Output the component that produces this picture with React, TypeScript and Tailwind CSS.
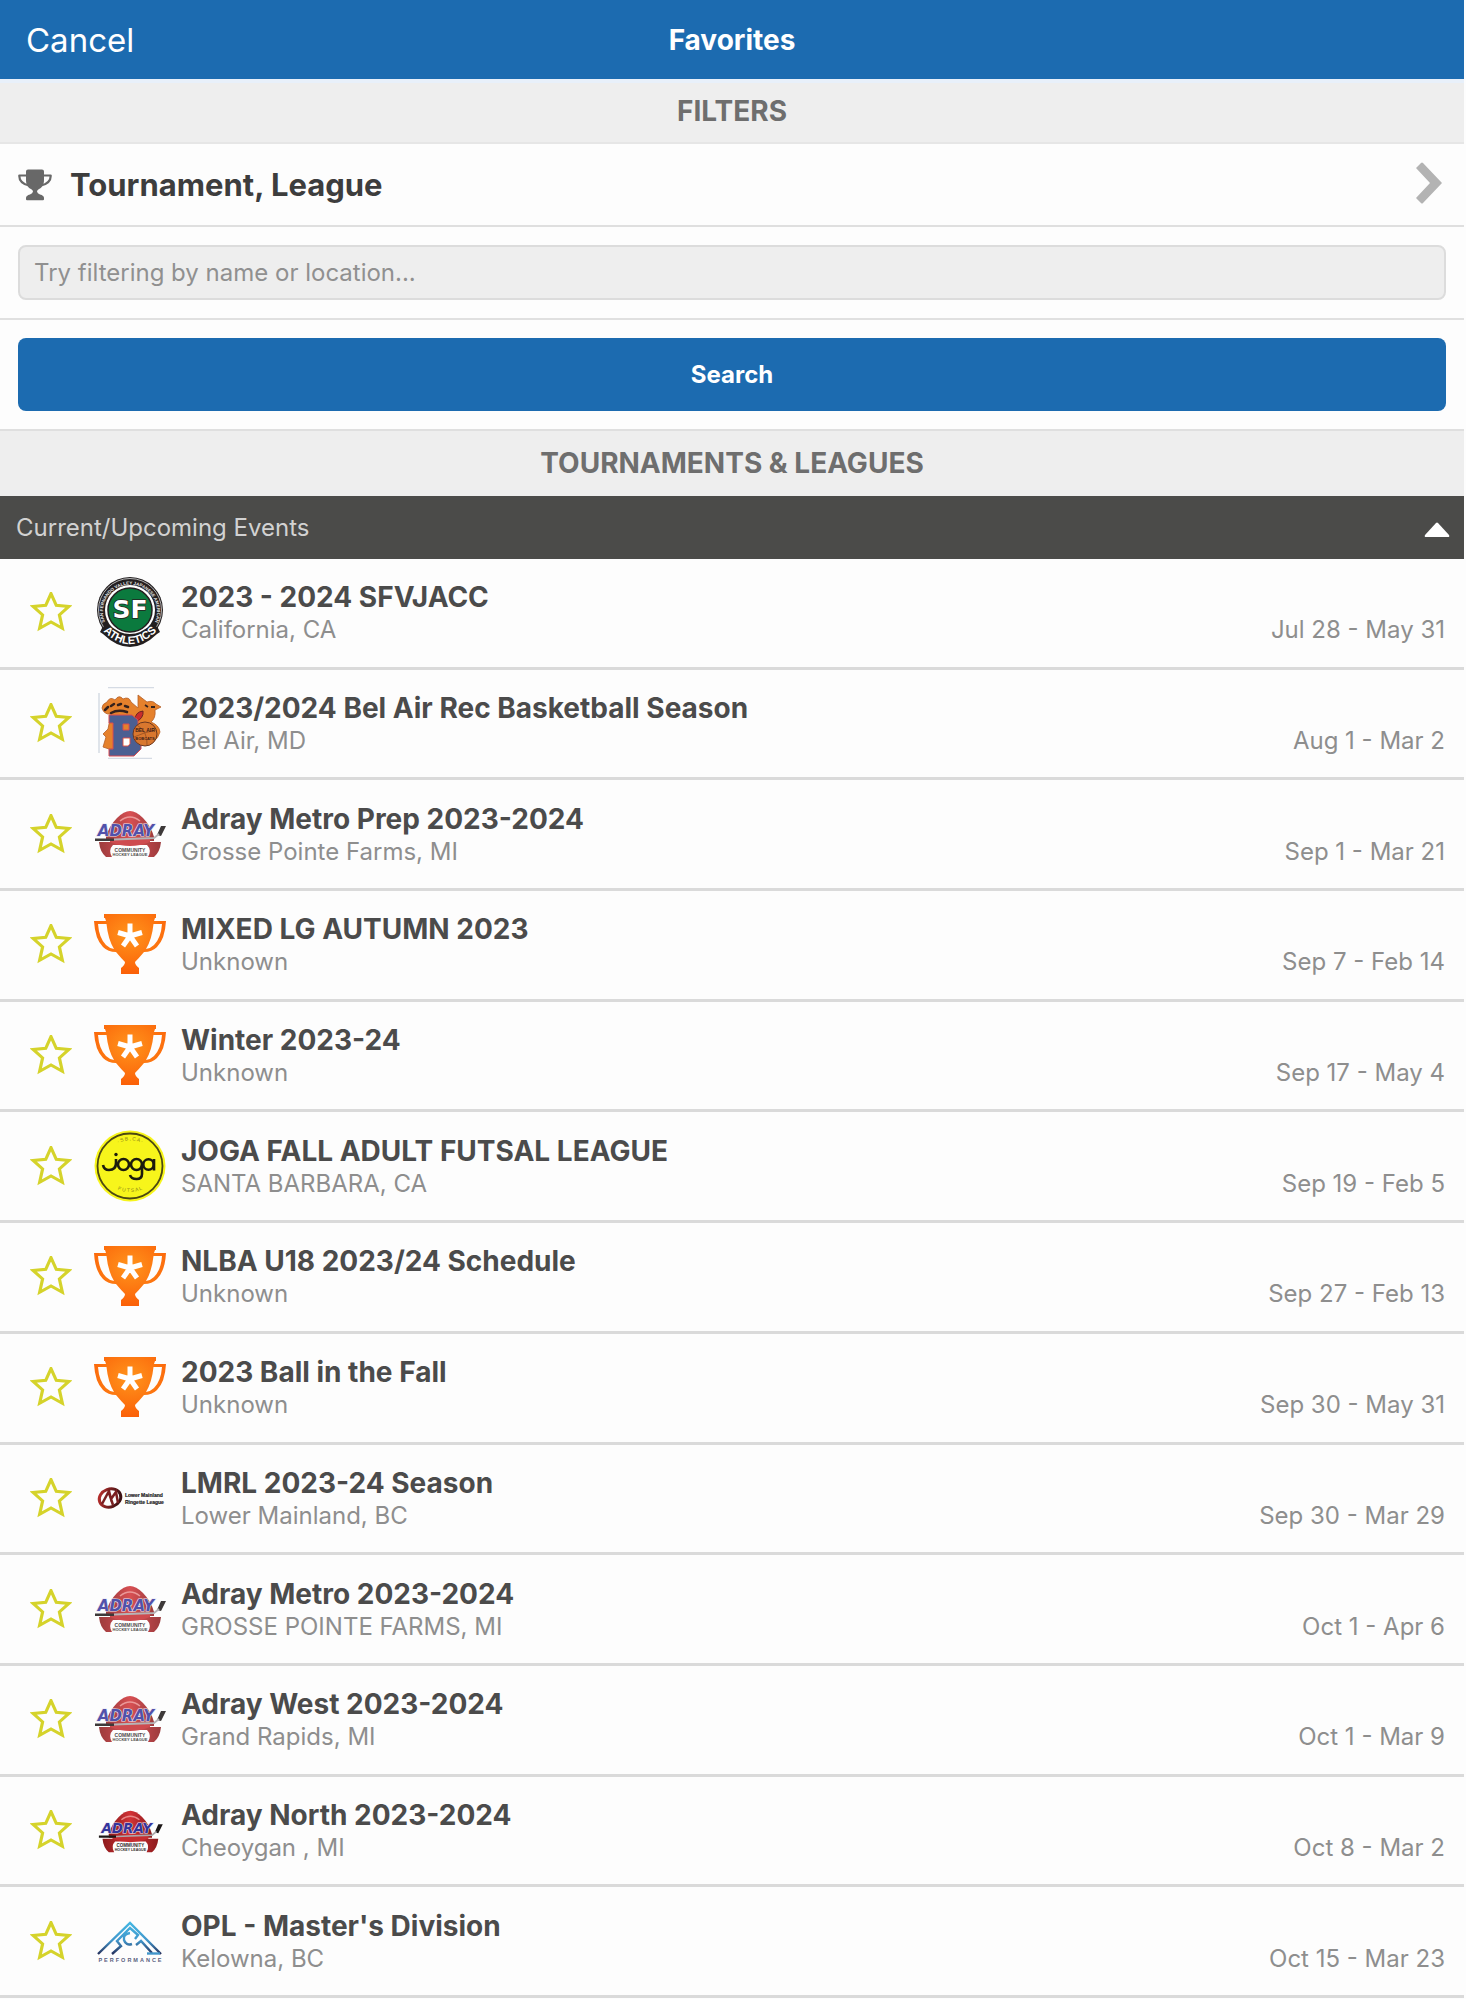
import type { ReactNode } from "react";

function TrophyGlyph() {
  return (
    <svg viewBox="0 0 34 32" className="h-8 w-[34px] shrink-0" aria-hidden="true">
      <path d="M8.500 6.500H1.300Q1 14 11 16.500M25.500 6.500H32.700Q33 14 23 16.500" fill="none" stroke="#686868" strokeWidth="2.200" strokeLinejoin="round" />
      <path fill="#686868" d="M8 2.500Q8 .500 10 .500H24Q26 .500 26 2.500V11C26 16 24 18.500 21 20Q19 21 19 22.500Q19.300 24.700 22 25.500Q26 26.500 26 29V30.300Q26 31.300 25 31.300H9Q8 31.300 8 30.300V29Q8 26.500 12 25.500Q14.700 24.700 15 22.500Q15 21 13 20C10 18.500 8 16 8 11Z" />
    </svg>
  );
}

function Star() {
  return (
    <svg viewBox="1 3 40 38" className="h-10 w-[42px]" fill="none" stroke="#d5d32b" strokeWidth="3" strokeLinejoin="miter" aria-hidden="true">
      <path d="M21 4.500L26 15.700L38 16.800L29 24.800L31.800 37.500L21 31.500L10.200 37.500L13 24.800L4 16.800L16 15.700Z" />
    </svg>
  );
}

function Logo({ children, faded }: { children: ReactNode; faded?: boolean }) {
  return (
    <svg viewBox="0 0 72 72" className={faded ? "size-[72px] shrink-0 opacity-85" : "size-[72px] shrink-0"} aria-hidden="true">
      {children}
    </svg>
  );
}

function SfLogo() {
  return (
    <Logo>
      <defs>
        <path id="sf-top" d="M12 48A27 27 0 1 1 60 48" />
        <path id="sf-bottom" d="M8 54Q36 82 64 54" />
      </defs>
      <circle cx="36" cy="34" r="33" fill="#231f20" />
      <path d="M9 50L6 56L9 58Q36 84 63 58L66 56L63 50Z" fill="#231f20" />
      <circle cx="36" cy="34" r="31.500" fill="none" stroke="#d8d8d8" strokeWidth=".800" />
      <circle cx="36" cy="34" r="25" fill="#fff" />
      <circle cx="36" cy="34" r="22" fill="#0b7a3e" stroke="#231f20" strokeWidth="1.500" />
      <text fontSize="4.500" fontWeight="700" fill="#e4e4e4" fontFamily="Liberation Sans, sans-serif">
        <textPath href="#sf-top" startOffset="50%" textAnchor="middle">SAN FERNANDO VALLEY JAPANESE AMERICAN</textPath>
      </text>
      <path d="M9 51Q10 57 12 58Q36 79 60 58Q63 56 63 51L58 48Q36 68 14 48Z" fill="#231f20" />
      <text fontSize="11" fontWeight="700" fill="#fff" fontFamily="Liberation Sans, sans-serif">
        <textPath href="#sf-bottom" startOffset="50%" textAnchor="middle">ATHLETICS</textPath>
      </text>
      <text x="36" y="42" textAnchor="middle" fontSize="25" fontWeight="700" fill="#fff" stroke="#231f20" strokeWidth="1.500" paintOrder="stroke" fontFamily="DejaVu Sans, sans-serif">SF</text>
    </Logo>
  );
}

function BelAirLogo() {
  return (
    <Logo>
      <path d="M14 .500H60M14 71.500H58M5 6V66" stroke="#d5dbe4" strokeWidth="1.500" />
      <path d="M8 21Q8 17 13 15Q16 9 21 13Q25 7 29 12Q35 9 37 15L44 21V8L53 15Q59 13 62 17L67 20L61 23Q62 31 57 35Q65 38 66 45Q62 58 50 56L30 60L15 62L9 60L12 50L9 47L14 42L17 27Q10 28 8 21Z" fill="#e5812c" stroke="#b4602a" strokeWidth=".800" />
      <path d="M11 23l3-3M17 19l3-2M24 18l3-1M31 19l3 1M17 26Q24 22 33 25" fill="none" stroke="#34211c" strokeWidth="2.500" strokeLinecap="round" />
      <path d="M51 18l3 2M57 20l4 0" fill="none" stroke="#34211c" strokeWidth="1.800" />
      <path d="M41 33Q41 25 49 24Q50 31 42 35Z" fill="#c92c2c" stroke="#6b2222" />
      <path fillRule="evenodd" d="M15 28H38L44 33V44L41 48L47 54V62L40 69H15V62H19V36H15ZM29 37V43H35V37ZM29 51V59H34L36 57V51Z" fill="#4b5f92" stroke="#db4b50" strokeWidth="1" />
      <path d="M29.500 51.500H35.500V57L34 58.500H29.500Z" fill="#fff" />
      <circle cx="51" cy="47" r="12" fill="#d9772e" stroke="#6b3720" />
      <path d="M40 50Q51 45 62 43M43 38Q54 45 53 58" fill="none" stroke="#8d481e" strokeWidth=".700" />
      <g fontWeight="700" fill="#402018" fontFamily="Liberation Sans, sans-serif" textAnchor="middle">
        <text x="51" y="45" fontSize="5">BEL AIR</text>
        <text x="51" y="53" fontSize="4">BOBCATS</text>
      </g>
    </Logo>
  );
}

function AdrayLogo({ bright }: { bright?: boolean }) {
  return (
    <Logo faded={!bright}>
      <defs>
        <linearGradient id="adray-red" x1="0" x2="1">
          <stop offset="0" stopColor="#8c1a1c" />
          <stop offset=".5" stopColor="#d23236" />
          <stop offset="1" stopColor="#8c1a1c" />
        </linearGradient>
      </defs>
      <g transform={bright ? "translate(4 6) scale(.9)" : "translate(0 1)"}>
        <path d="M12 38Q15 27 23 19Q30 12 36 12Q42 12 49 19Q57 27 60 38V42H12Z" fill="url(#adray-red)" />
        <path d="M26 22Q36 14 46 22" fill="none" stroke="#e98787" strokeWidth="1.500" />
        <path d="M5 43H67Q66 53 60 58H54Q58 51 53 46H19Q14 51 18 58H12Q6 53 5 43Z" fill="url(#adray-red)" />
        <path d="M16 43Q26 47 36 47Q46 47 56 43V40H16Z" fill="#c62d31" />
        <text x="32" y="37" textAnchor="middle" fontSize="15" fontWeight="700" fontStyle="italic" fill="#34349c" stroke="#e6e3f0" strokeWidth="1.200" paintOrder="stroke" fontFamily="DejaVu Sans, sans-serif">ADRAY</text>
        <path d="M1 39.500H20V42H1ZM63 36L67 27L72 27L67 37Z" fill="#1c1717" />
        <path d="M20 40.500L60 39L65 35" fill="none" stroke="#aaa8ab" strokeWidth="1.800" />
        <text x="36" y="52.500" textAnchor="middle" fontSize="5" fontWeight="700" fill="#302b2b" fontFamily="Liberation Sans, sans-serif">COMMUNITY</text>
        <text x="36" y="57" textAnchor="middle" fontSize="4" fontWeight="700" fill="#302b2b" fontFamily="Liberation Sans, sans-serif">HOCKEY LEAGUE</text>
      </g>
    </Logo>
  );
}

function CupLogo() {
  return (
    <Logo>
      <defs>
        <radialGradient id="cup" cx=".5" cy=".35" r=".65">
          <stop offset="0" stopColor="#ff951c" />
          <stop offset="1" stopColor="#fb6008" />
        </radialGradient>
      </defs>
      <g transform="translate(0 1)">
        <path fillRule="evenodd" d="M10 5H62V9H61L60 12H72Q71 30 63 38Q58 43 50 43Q45 49 41 53Q41 56 45 59V65H27V59Q31 56 31 53Q27 49 22 43Q14 43 9 38Q1 30 0 12H12L11 9H10ZM4 15Q5 29 12 36Q15 39 20 40Q14 30 12.500 15ZM68 15H59.500Q58 30 52 40Q57 39 60 36Q67 29 68 15Z" fill="url(#cup)" />
        <path d="M36 27V14.500M36 27L48 23.500M36 27L43 37M36 27L29 37M36 27L24 23.500" stroke="#fff" strokeWidth="5" />
      </g>
    </Logo>
  );
}

function JogaLogo() {
  return (
    <Logo>
      <defs>
        <path id="joga-top" d="M14 22A25 25 0 0 1 58 22" />
        <path id="joga-bottom" d="M8 42A29 27 0 0 0 64 42" />
      </defs>
      <circle cx="36" cy="36" r="35.500" fill="#f7f51b" />
      <circle cx="36" cy="36" r="32.500" fill="none" stroke="#4c4812" strokeWidth="1.800" />
      <text fontSize="5" fill="#8d8717" fontFamily="Liberation Sans, sans-serif">
        <textPath href="#joga-top" startOffset="50%" textAnchor="middle" dominantBaseline="middle">· S B , C A ·</textPath>
      </text>
      <text fontSize="5" fill="#8d8717" fontFamily="Liberation Sans, sans-serif">
        <textPath href="#joga-bottom" startOffset="50%" textAnchor="middle">F U T S A L</textPath>
      </text>
      <g fill="none" stroke="#1c1b0d" strokeWidth="2.600">
        <path d="M9 35Q10 40 15 40Q22 40 22 33V29" />
        <circle cx="29.500" cy="34.500" r="5.500" />
        <circle cx="42.500" cy="34.500" r="5.500" />
        <path d="M48 34.500V44Q48 49 42.500 49Q37 49 36 45" />
        <circle cx="54.500" cy="34.500" r="5.200" />
        <path d="M60 29V40.500" />
      </g>
      <circle cx="22" cy="24.500" r="1.700" fill="#1c1b0d" />
    </Logo>
  );
}

function RingetteLogo() {
  return (
    <Logo>
      <defs>
        <linearGradient id="ringette" x1="0" x2="1" y2=".5">
          <stop offset="0" stopColor="#c4312f" />
          <stop offset="1" stopColor="#3d1214" />
        </linearGradient>
      </defs>
      <ellipse cx="16" cy="36" rx="11" ry="9" fill="none" stroke="url(#ringette)" strokeWidth="3" transform="rotate(-20 16 36)" />
      <path d="M8 42L15 29L17 37L22 30L24 41M15 31L19 43" fill="none" stroke="#7b1f20" strokeWidth="2.500" />
      <g fontSize="5" fontWeight="700" fill="#232323" stroke="#232323" strokeWidth=".200" fontFamily="Liberation Sans, sans-serif">
        <text x="31" y="35">Lower Mainland</text>
        <text x="31" y="42">Ringette League</text>
      </g>
    </Logo>
  );
}

function PerformanceLogo() {
  return (
    <Logo>
      <defs>
        <linearGradient id="peak" x1="0" y1="18" x2="0" y2="50" gradientUnits="userSpaceOnUse">
          <stop offset="0" stopColor="#43b6e2" />
          <stop offset=".55" stopColor="#4196cb" />
          <stop offset="1" stopColor="#242a55" />
        </linearGradient>
      </defs>
      <g fill="none" stroke="url(#peak)" strokeWidth="2.400">
        <path d="M4 49L36 18L67 49" />
        <path d="M18 49L27 41L23 36L36 23L44 30L41 34M36 28Q29 29 30 35Q32 41 38 39M42 40L47 36L58 48" />
      </g>
      <path d="M53 48.500H66" stroke="#4196cb" strokeWidth="2.400" />
      <text x="37" y="57" textAnchor="middle" fontSize="5.500" fontWeight="700" letterSpacing="2" fill="#5a6080" fontFamily="Liberation Sans, sans-serif">PERFORMANCE</text>
    </Logo>
  );
}

const events = [
  { name: "2023 - 2024 SFVJACC", place: "California, CA", dates: "Jul 28 - May 31", logo: <SfLogo /> },
  { name: "2023/2024 Bel Air Rec Basketball Season", place: "Bel Air, MD", dates: "Aug 1 - Mar 2", logo: <BelAirLogo /> },
  { name: "Adray Metro Prep 2023-2024", place: "Grosse Pointe Farms, MI", dates: "Sep 1 - Mar 21", logo: <AdrayLogo /> },
  { name: "MIXED LG AUTUMN 2023", place: "Unknown", dates: "Sep 7 - Feb 14", logo: <CupLogo /> },
  { name: "Winter 2023-24", place: "Unknown", dates: "Sep 17 - May 4", logo: <CupLogo /> },
  { name: "JOGA FALL ADULT FUTSAL LEAGUE", place: "SANTA BARBARA, CA", dates: "Sep 19 - Feb 5", logo: <JogaLogo /> },
  { name: "NLBA U18 2023/24 Schedule", place: "Unknown", dates: "Sep 27 - Feb 13", logo: <CupLogo /> },
  { name: "2023 Ball in the Fall", place: "Unknown", dates: "Sep 30 - May 31", logo: <CupLogo /> },
  { name: "LMRL 2023-24 Season", place: "Lower Mainland, BC", dates: "Sep 30 - Mar 29", logo: <RingetteLogo /> },
  { name: "Adray Metro 2023-2024", place: "GROSSE POINTE FARMS, MI", dates: "Oct 1 - Apr 6", logo: <AdrayLogo /> },
  { name: "Adray West 2023-2024", place: "Grand Rapids, MI", dates: "Oct 1 - Mar 9", logo: <AdrayLogo /> },
  { name: "Adray North 2023-2024", place: "Cheoygan , MI", dates: "Oct 8 - Mar 2", logo: <AdrayLogo bright /> },
  { name: "OPL - Master's Division", place: "Kelowna, BC", dates: "Oct 15 - Mar 23", logo: <PerformanceLogo /> },
];

export default function App() {
  return (
    <div className="flex min-h-screen flex-col bg-[#fdfdfd] pr-0.5 pb-px font-['Inter','Liberation_Sans',sans-serif]">
      <header className="grid h-[79px] grid-cols-[1fr_auto_1fr] items-center bg-[#1c6bb0] px-[26px] text-white">
        <button className="justify-self-start text-[33px] leading-10">Cancel</button>
        <h1 className="text-[28px] leading-9 font-bold">Favorites</h1>
      </header>

      <h2 className="flex h-[65px] items-center justify-center border-t-4 border-b-2 border-t-[#e8f0fa] border-b-[#e6e6e6] bg-[#eeeeee] pb-1 text-[28px] font-bold text-[#6e6e6e]">
        FILTERS
      </h2>
      <button className="flex h-[83px] items-center border-b-2 border-[#dfdfdf] pr-[22px] pl-[18px] text-left">
        <TrophyGlyph />
        <span className="mt-0.5 ml-[18px] flex-1 text-[31px] font-bold text-[#3d3d3d]">Tournament, League</span>
        <svg viewBox="0 0 26 42" className="mb-1 h-[42px] w-[26px]" aria-hidden="true">
          <path d="M5 1L0 6L14 21L0 36L5 41Q6 42 7 41L26 21L7 1Q6 0 5 1Z" fill="#b3b3b3" />
        </svg>
      </button>
      <form onSubmit={(e) => e.preventDefault()}>
        <div className="border-b-2 border-[#e0e0e0] px-[18px] py-[18px]">
          <input
            type="text"
            aria-label="Filter by name or location"
            placeholder="Try filtering by name or location..."
            className="block h-[55px] w-full rounded-lg border-2 border-[#dcdcdc] bg-[#eeeeee] px-3.5 text-2xl placeholder:text-[#909090]"
          />
        </div>
        <div className="border-b-2 border-[#dfdfdf] px-[18px] py-[18px]">
          <button type="submit" className="block h-[73px] w-full rounded-lg bg-[#1c6bb0] text-2xl font-bold text-white">
            Search
          </button>
        </div>
      </form>

      <h2 className="flex h-[65px] items-center justify-center bg-[#eeeeee] pb-0.5 text-[28px] font-bold text-[#6e6e6e]">
        TOURNAMENTS &amp; LEAGUES
      </h2>
      <button aria-expanded="true" className="flex h-[63px] items-center justify-between bg-[#4b4b49] pr-3.5 pl-4 text-left text-2xl text-[#d2d2d2]">
        Current/Upcoming Events
        <svg viewBox="0 0 26 16" className="mt-1 h-4 w-[26px]" aria-hidden="true">
          <path d="M12 1Q13 0 14 1L25 13Q26 15 24 15H2Q0 15 1 13Z" fill="#fff" />
        </svg>
      </button>

      <ul className="flex flex-1 flex-col">
        {events.map((event) => (
          <li key={event.name} className="flex min-h-[110px] flex-1 items-center border-b-3 border-[#dadada] pr-[19px] pb-px pl-[30px]">
            <button aria-label={`Add ${event.name} to favorites`} className="mr-[22px] shrink-0">
              <Star />
            </button>
            {event.logo}
            <a href="#" className="ml-[15px] flex flex-1 items-end justify-between">
              <span>
                <span className="block text-[28px] leading-9 font-bold text-[#4b4b4b]">{event.name}</span>
                <span className="block text-2xl leading-[30px] text-[#8e8e8e]">{event.place}</span>
              </span>
              <span className="text-2xl leading-[30px] text-[#8e8e8e]">{event.dates}</span>
            </a>
          </li>
        ))}
      </ul>
    </div>
  );
}
